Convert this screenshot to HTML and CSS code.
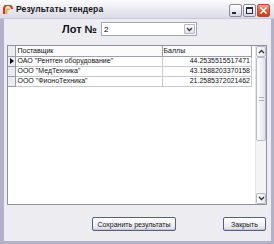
FILE: index.html
```html
<!DOCTYPE html>
<html lang="ru">

<head>
  <meta charset="UTF-8">
  <title>Результаты тендера</title>
  <link rel="stylesheet" href="styles.css">
</head>

<body>
  <div class="window">
    <!-- заголовок окна -->
    <div class="titlebar">
      <svg class="app-icon" width="10" height="10" viewBox="0 0 10 10">
        <path d="M1 9 L1 4 A4 4 0 0 1 9 4" fill="none" stroke="#d9331a" stroke-width="2.2"/>
        <path d="M3.5 9 L3.5 5 A1.6 1.6 0 0 1 6.5 5" fill="none" stroke="#f0a020" stroke-width="1.6"/>
      </svg>
      <span class="title">Результаты тендера</span>
      <div class="controls">
        <div class="ctl ctl-min"><span></span></div>
        <div class="ctl ctl-max"><span></span></div>
        <div class="ctl ctl-close">
          <svg width="9" height="9" viewBox="0 0 9 9">
            <path d="M1.5 1.5 L7.5 7.5 M7.5 1.5 L1.5 7.5" stroke="#fff" stroke-width="1.6"/>
          </svg>
        </div>
      </div>
    </div>

    <div class="body">
      <!-- выбор лота -->
      <div class="lot">
        <span class="lot-label">Лот №</span>
        <div class="combo">
          <span class="combo-value">2</span>
          <div class="combo-btn">
            <svg width="7" height="5" viewBox="0 0 7 5">
              <path d="M1 1 L3.5 3.5 L6 1" fill="none" stroke="#333" stroke-width="1.3"/>
            </svg>
          </div>
        </div>
      </div>

      <!-- таблица результатов -->
      <div class="grid">
        <div class="grid-area">
          <table class="grid-table">
            <tr class="grid-head">
              <td class="ind"></td>
              <td class="col-name">Поставщик</td>
              <td class="col-score">Баллы</td>
            </tr>
            <tr>
              <td class="ind">
                <svg width="4" height="6" viewBox="0 0 4 6"><path d="M0 0 L4 3 L0 6 Z" fill="#000"/></svg>
              </td>
              <td class="col-name">ОАО "Рентген оборудование"</td>
              <td class="col-score num">44.2535515517471</td>
            </tr>
            <tr>
              <td class="ind"></td>
              <td class="col-name">ООО "МедТехника"</td>
              <td class="col-score num">43.1588203370158</td>
            </tr>
            <tr>
              <td class="ind"></td>
              <td class="col-name">ООО "ФионоТехника"</td>
              <td class="col-score num">21.2585372021462</td>
            </tr>
          </table>
        </div>
        <div class="scrollbar">
          <div class="sb-btn">
            <svg width="7" height="5" viewBox="0 0 7 5"><path d="M1 4 L3.5 1.5 L6 4" fill="none" stroke="#333" stroke-width="1.3"/></svg>
          </div>
          <div class="sb-thumb"><span></span></div>
          <div class="sb-track"></div>
          <div class="sb-btn">
            <svg width="7" height="5" viewBox="0 0 7 5"><path d="M1 1 L3.5 3.5 L6 1" fill="none" stroke="#333" stroke-width="1.3"/></svg>
          </div>
        </div>
      </div>

      <!-- кнопки -->
      <div class="actions">
        <button class="btn btn-save">Сохранить результаты</button>
        <button class="btn btn-close">Закрыть</button>
      </div>
    </div>
  </div>
</body>

</html>
```

FILE: styles.css
```css
* {
  margin: 0;
  padding: 0;
  box-sizing: border-box;
}

body {
  width: 274px;
  height: 244px;
  font-family: 'Liberation Sans', Arial, sans-serif;
  background: #ffffff;
  overflow: hidden;
}

.window {
  width: 274px;
  height: 244px;
  display: flex;
  flex-direction: column;
  background: #b2b1c9;
  border-radius: 7px 7px 0 0;
  overflow: hidden;
}

/* заголовок */
.titlebar {
  height: 19px;
  display: flex;
  align-items: center;
  padding-left: 3px;
  background: linear-gradient(#fbfbfd 0%, #ececf2 45%, #dcdbe6 100%);
  border-bottom: 1px solid #c9c8d8;
}

.app-icon {
  margin-right: 3px;
  margin-top: 1px;
}

.title {
  font-size: 8.5px;
  font-weight: bold;
  color: #151515;
  letter-spacing: 0.1px;
}

.controls {
  margin-left: auto;
  display: flex;
  gap: 1px;
  padding-right: 4px;
  margin-top: 2px;
}

.ctl {
  width: 13px;
  height: 13px;
  border: 1px solid #8a89a4;
  border-radius: 2px;
  background: linear-gradient(#ffffff, #d9d8e4);
  display: flex;
  align-items: center;
  justify-content: center;
}

.ctl-min span {
  width: 4px;
  height: 2px;
  background: #2a2a3a;
  margin-top: 6px;
  margin-right: 3px;
}

.ctl-max span {
  width: 7px;
  height: 7px;
  border: 1px solid #2a2a3a;
  border-top-width: 2px;
}

.ctl-close {
  background: linear-gradient(#f4a08a, #e0522e 60%, #cc3e1e);
  border-color: #b04a3a;
}

/* тело окна */
.body {
  flex: 1;
  margin: 0 3px 3px 4px;
  background: #ececf1;
  display: flex;
  flex-direction: column;
}

.lot {
  display: flex;
  align-items: center;
  margin-top: 3px;
  padding-left: 58px;
  height: 14px;
}

.lot-label {
  font-size: 11px;
  font-weight: bold;
  color: #111;
  margin-right: 4px;
}

.combo {
  width: 96px;
  height: 14px;
  background: #ffffff;
  border: 1px solid #a3a6b8;
  display: flex;
  align-items: center;
}

.combo-value {
  font-size: 8px;
  padding-left: 2px;
  flex: 1;
  color: #000;
}

.combo-btn {
  width: 11px;
  height: 10px;
  margin-right: 1px;
  border: 1px solid #b6b8c8;
  border-radius: 1px;
  background: linear-gradient(#ffffff, #e0e0ea);
  display: flex;
  align-items: center;
  justify-content: center;
}

/* таблица */
.grid {
  margin: 9px 4px 0 3px;
  height: 160px;
  border: 1px solid #8f8fa3;
  background: #ffffff;
  display: flex;
}

.grid-area {
  flex: 1;
}

.grid-table {
  border-collapse: collapse;
  font-size: 7px;
  color: #111;
}

.grid-table td {
  height: 10px;
  padding: 0 1px;
  border: 1px solid #c8c8d0;
  white-space: nowrap;
  line-height: 8px;
}

.grid-head td {
  border-color: #a0a0ac;
  background: #fbfbfc;
}

.grid-table tr:first-child td {
  border-top: 0;
}

.grid-table .ind {
  width: 8px;
  border-left: 0;
  background: #ecebf0;
  border-color: #9c9ca8;
  padding: 0 0 0 2px;
}

.ind svg {
  display: block;
}

.col-name {
  width: 147px;
}

.col-score {
  width: 90px;
}

.num {
  text-align: right;
}

/* полоса прокрутки */
.scrollbar {
  width: 11px;
  margin-left: 3px;
  display: flex;
  flex-direction: column;
  background: #f4f4f7;
  border-left: 1px solid #e4e4ea;
}

.sb-btn {
  height: 11px;
  border: 1px solid #b9b9cc;
  border-radius: 2px;
  background: linear-gradient(90deg, #ffffff, #e4e4ee);
  display: flex;
  align-items: center;
  justify-content: center;
}

.sb-thumb {
  height: 84px;
  border: 1px solid #b9b9cc;
  border-radius: 2px;
  background: linear-gradient(90deg, #fdfdff, #e2e2ec);
  display: flex;
  align-items: center;
  justify-content: center;
}

.sb-thumb span {
  width: 5px;
  height: 4px;
  border-top: 1px solid #b0b0c4;
  border-bottom: 1px solid #b0b0c4;
}

.sb-track {
  flex: 1;
}

/* кнопки */
.actions {
  display: flex;
  justify-content: flex-end;
  gap: 47px;
  margin-top: 12px;
  padding-right: 5px;
}

.btn {
  height: 14px;
  font-family: 'Liberation Sans', Arial, sans-serif;
  font-size: 7px;
  color: #111;
  border: 1px solid #56607e;
  border-radius: 2px;
  background: linear-gradient(#ffffff, #ececf2 70%, #d6d6e0);
  box-shadow: inset 0 -1px 0 #c6c6d4;
}

.btn-save {
  width: 84px;
}

.btn-close {
  width: 43px;
}
```
